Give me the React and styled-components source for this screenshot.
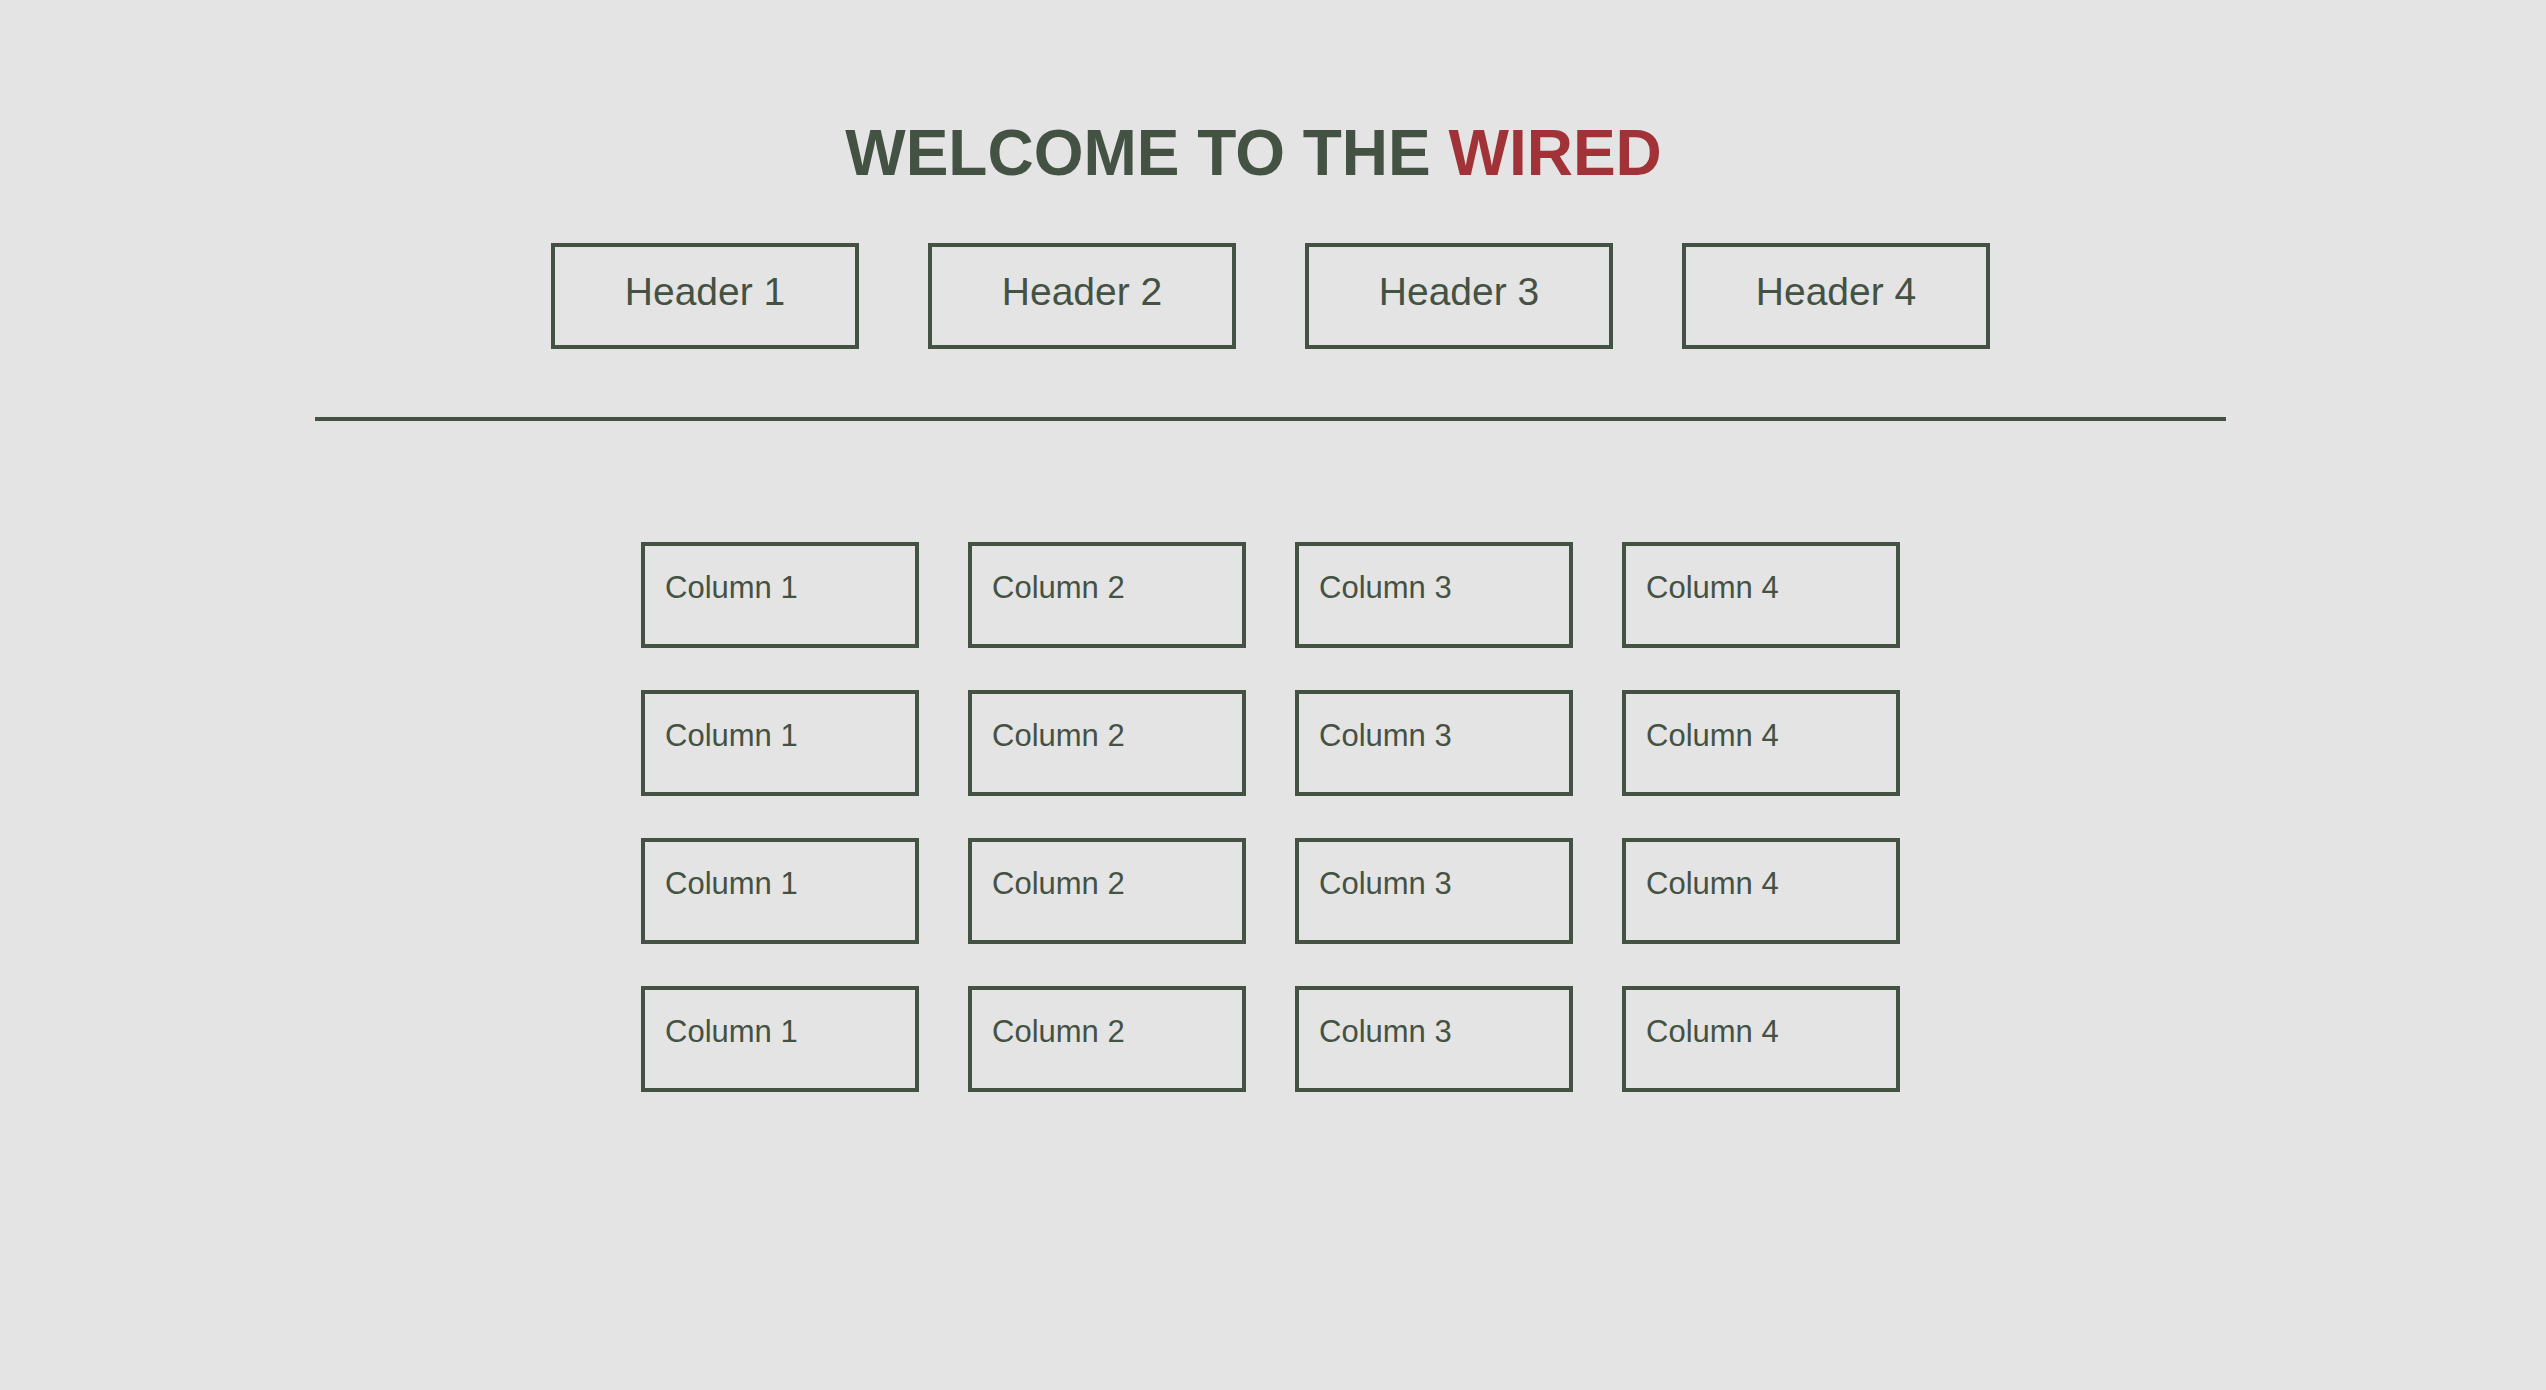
import styled, { createGlobalStyle } from "styled-components"

const GlobalStyle = createGlobalStyle`
    html, body {
        margin: 0;
        padding: 0;
        background-color: #e4e4e4;
    }

    body {
        font-family: "Liberation Sans", Arial, Helvetica, sans-serif;
        color: #445243;
    }
`

const Page = styled.div`
    min-height: 1390px;
    padding: 117px 5px 0 0;
    box-sizing: border-box;
    display: flex;
    flex-direction: column;
    align-items: center;
`

const Title = styled.h1`
    margin: 0 34px 0 0;
    font-size: 64px;
    line-height: 72px;
    font-weight: 700;
    color: #445243;
`

const Accent = styled.span`
    color: #a13237;
`

const HeaderRow = styled.nav`
    margin-top: 54px;
    display: flex;
    gap: 69px;
`

const HeaderBox = styled.div`
    width: 308px;
    height: 106px;
    box-sizing: border-box;
    border: 4px solid #445243;
    padding-top: 22px;
    text-align: center;
    font-size: 39px;
    line-height: 45px;
`

const Rule = styled.hr`
    width: 75.2%;
    margin: 68px 0 0;
    border: none;
    height: 4px;
    background-color: #445243;
`

const Grid = styled.section`
    margin-top: 121px;
    display: grid;
    grid-template-columns: repeat(4, 278px);
    grid-auto-rows: 106px;
    column-gap: 49px;
    row-gap: 42px;
`

const Cell = styled.div`
    box-sizing: border-box;
    border: 4px solid #445243;
    padding: 24px 20px 0;
    font-size: 31px;
    line-height: 36px;
`

const headers = ["Header 1", "Header 2", "Header 3", "Header 4"]
const rows = [1, 2, 3, 4]
const columns = ["Column 1", "Column 2", "Column 3", "Column 4"]

export default function App () {
    return (
        <>
        <GlobalStyle />
        <Page>
            <Title>WELCOME TO THE <Accent>WIRED</Accent></Title>
            <HeaderRow>
                {headers.map(h => <HeaderBox key={h}>{h}</HeaderBox>)}
            </HeaderRow>
            <Rule />
            <Grid>
                {rows.map(r => columns.map(c => (
                    <Cell key={r + c}>{c}</Cell>
                )))}
            </Grid>
        </Page>
        </>
    )
}
